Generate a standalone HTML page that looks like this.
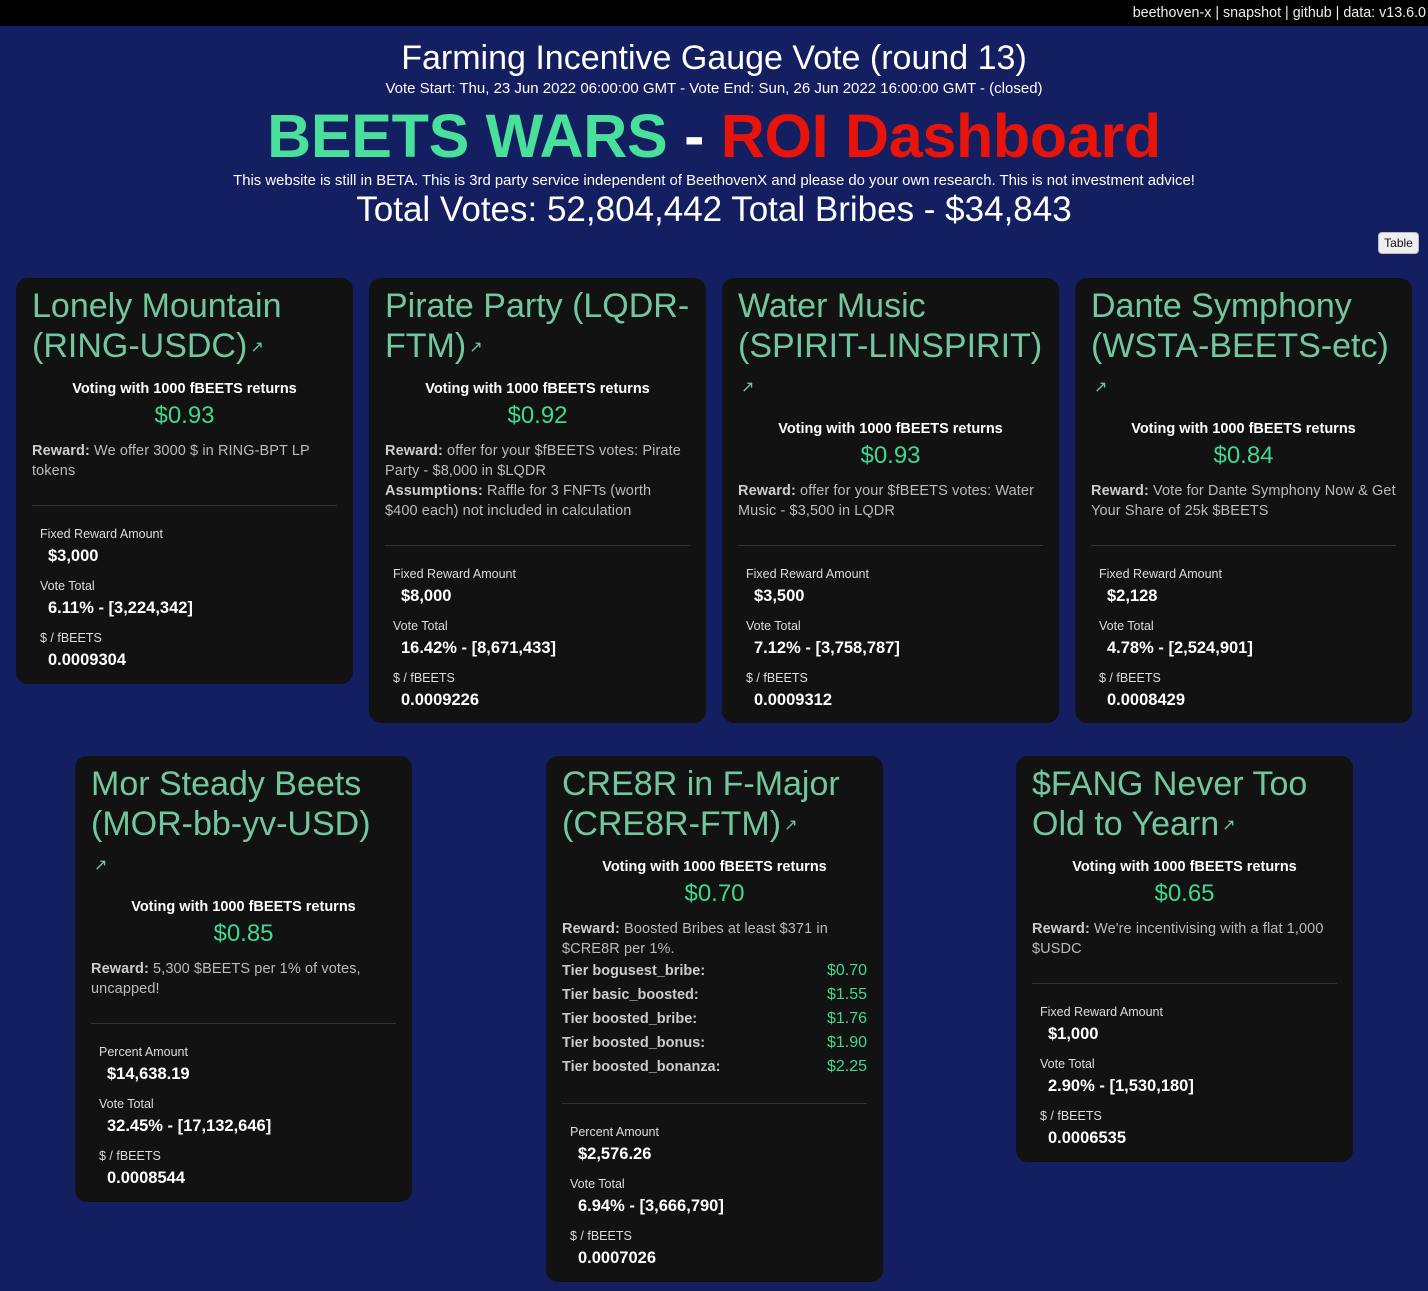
<!DOCTYPE html>
<html><head><meta charset="utf-8"><style>
*{box-sizing:border-box;margin:0;padding:0}
body{width:1428px;height:1291px;background:#141f62;font-family:"Liberation Sans",sans-serif;color:#fff;position:relative;overflow:hidden}
.top{height:26px;background:#000;text-align:right;font-size:14.3px;line-height:26px;padding-right:2px;color:#eee}
.h1{position:absolute;top:38px;left:0;width:1428px;text-align:center;font-size:34px;line-height:40px}
.dates{position:absolute;top:80px;left:0;width:1428px;text-align:center;font-size:15px;line-height:18px}
.big{position:absolute;top:100px;left:0;width:1428px;text-align:center;font-size:61px;font-weight:bold;line-height:72px;letter-spacing:-0.3px}
.big .g{color:#48e09a}.big .r{color:#e8140a}
.beta{position:absolute;top:172px;left:0;width:1428px;text-align:center;font-size:14.9px;line-height:18px}
.tot{position:absolute;top:190px;left:0;width:1428px;text-align:center;font-size:35px;line-height:40px}
.btn{position:absolute;left:1378px;top:232px;width:41px;height:22px;background:#eee;border:1px solid #bbb;border-radius:4px;color:#111;font-size:12px;line-height:20px;text-align:center}
.card{position:absolute;width:337px;background:#121212;border-radius:12px;padding:8px 16px 0 16px}
.t{font-size:34px;line-height:40px;color:#72c79e;white-space:nowrap}
.ar{font-size:16px;vertical-align:middle;margin-left:3px}
.v{text-align:center;font-size:14.5px;font-weight:bold;line-height:20px;margin-top:11px}
.p{text-align:center;font-size:24px;line-height:28px;color:#3fd98e;margin-top:3px}
.rw{font-size:14.5px;line-height:20px;color:#bbb;margin-top:11px;letter-spacing:0.1px}
.rw b{color:#ccc}
.tier{display:flex;justify-content:space-between;font-size:14.5px;font-weight:bold;color:#ccc;line-height:24px}
.tier span:last-child{font-weight:normal;font-size:16px;color:#3fd98e}
hr{border:0;border-top:1px solid #333;margin-top:24px}
.st{padding:20px 8px 0}
.l{font-size:12.5px;line-height:16px;color:#ddd}
.n{font-size:16.5px;font-weight:bold;line-height:20px;margin:4px 0 12px 8px}
</style></head><body>
<div class="top">beethoven-x | snapshot | github | data: v13.6.0</div>
<div class="h1">Farming Incentive Gauge Vote (round 13)</div>
<div class="dates">Vote Start: Thu, 23 Jun 2022 06:00:00 GMT - Vote End: Sun, 26 Jun 2022 16:00:00 GMT - (closed)</div>
<div class="big"><span class="g">BEETS WARS</span> - <span class="r">ROI Dashboard</span></div>
<div class="beta">This website is still in BETA. This is 3rd party service independent of BeethovenX and please do your own research. This is not investment advice!</div>
<div class="tot">Total Votes: 52,804,442 Total Bribes - $34,843</div>
<div class="btn">Table</div>

<div class="card" style="left:16px;top:278px;height:406px">
<div class="t">Lonely Mountain<br>(RING-USDC)<span class="ar">↗</span></div>
<div class="v">Voting with 1000 fBEETS returns</div><div class="p">$0.93</div>
<div class="rw"><b>Reward:</b> We offer 3000 $ in RING-BPT LP tokens</div>
<hr><div class="st"><div class="l">Fixed Reward Amount</div><div class="n">$3,000</div><div class="l">Vote Total</div><div class="n">6.11% - [3,224,342]</div><div class="l">$ / fBEETS</div><div class="n">0.0009304</div></div>
</div>

<div class="card" style="left:369px;top:278px;height:445px">
<div class="t">Pirate Party (LQDR-<br>FTM)<span class="ar">↗</span></div>
<div class="v">Voting with 1000 fBEETS returns</div><div class="p">$0.92</div>
<div class="rw"><b>Reward:</b> offer for your $fBEETS votes: Pirate Party - $8,000 in $LQDR<br><b>Assumptions:</b> Raffle for 3 FNFTs (worth<br>$400 each) not included in calculation</div>
<hr><div class="st"><div class="l">Fixed Reward Amount</div><div class="n">$8,000</div><div class="l">Vote Total</div><div class="n">16.42% - [8,671,433]</div><div class="l">$ / fBEETS</div><div class="n">0.0009226</div></div>
</div>

<div class="card" style="left:722px;top:278px;height:445px">
<div class="t">Water Music<br>(SPIRIT-LINSPIRIT)<br><span class="ar">↗</span></div>
<div class="v">Voting with 1000 fBEETS returns</div><div class="p">$0.93</div>
<div class="rw"><b>Reward:</b> offer for your $fBEETS votes: Water Music - $3,500 in LQDR</div>
<hr><div class="st"><div class="l">Fixed Reward Amount</div><div class="n">$3,500</div><div class="l">Vote Total</div><div class="n">7.12% - [3,758,787]</div><div class="l">$ / fBEETS</div><div class="n">0.0009312</div></div>
</div>

<div class="card" style="left:1075px;top:278px;height:445px">
<div class="t">Dante Symphony<br>(WSTA-BEETS-etc)<br><span class="ar">↗</span></div>
<div class="v">Voting with 1000 fBEETS returns</div><div class="p">$0.84</div>
<div class="rw"><b>Reward:</b> Vote for Dante Symphony Now &amp; Get Your Share of 25k $BEETS</div>
<hr><div class="st"><div class="l">Fixed Reward Amount</div><div class="n">$2,128</div><div class="l">Vote Total</div><div class="n">4.78% - [2,524,901]</div><div class="l">$ / fBEETS</div><div class="n">0.0008429</div></div>
</div>

<div class="card" style="left:75px;top:756px;height:446px">
<div class="t">Mor Steady Beets<br>(MOR-bb-yv-USD)<br><span class="ar">↗</span></div>
<div class="v">Voting with 1000 fBEETS returns</div><div class="p">$0.85</div>
<div class="rw"><b>Reward:</b> 5,300 $BEETS per 1% of votes, uncapped!</div>
<hr><div class="st"><div class="l">Percent Amount</div><div class="n">$14,638.19</div><div class="l">Vote Total</div><div class="n">32.45% - [17,132,646]</div><div class="l">$ / fBEETS</div><div class="n">0.0008544</div></div>
</div>

<div class="card" style="left:546px;top:756px;height:526px">
<div class="t">CRE8R in F-Major<br>(CRE8R-FTM)<span class="ar">↗</span></div>
<div class="v">Voting with 1000 fBEETS returns</div><div class="p">$0.70</div>
<div class="rw"><b>Reward:</b> Boosted Bribes at least $371 in $CRE8R per 1%.</div>
<div class="tier"><span>Tier bogusest_bribe:</span><span>$0.70</span></div>
<div class="tier"><span>Tier basic_boosted:</span><span>$1.55</span></div>
<div class="tier"><span>Tier boosted_bribe:</span><span>$1.76</span></div>
<div class="tier"><span>Tier boosted_bonus:</span><span>$1.90</span></div>
<div class="tier"><span>Tier boosted_bonanza:</span><span>$2.25</span></div>
<hr><div class="st"><div class="l">Percent Amount</div><div class="n">$2,576.26</div><div class="l">Vote Total</div><div class="n">6.94% - [3,666,790]</div><div class="l">$ / fBEETS</div><div class="n">0.0007026</div></div>
</div>

<div class="card" style="left:1016px;top:756px;height:406px">
<div class="t">$FANG Never Too<br>Old to Yearn<span class="ar">↗</span></div>
<div class="v">Voting with 1000 fBEETS returns</div><div class="p">$0.65</div>
<div class="rw"><b>Reward:</b> We're incentivising with a flat 1,000 $USDC</div>
<hr><div class="st"><div class="l">Fixed Reward Amount</div><div class="n">$1,000</div><div class="l">Vote Total</div><div class="n">2.90% - [1,530,180]</div><div class="l">$ / fBEETS</div><div class="n">0.0006535</div></div>
</div>
</body></html>
